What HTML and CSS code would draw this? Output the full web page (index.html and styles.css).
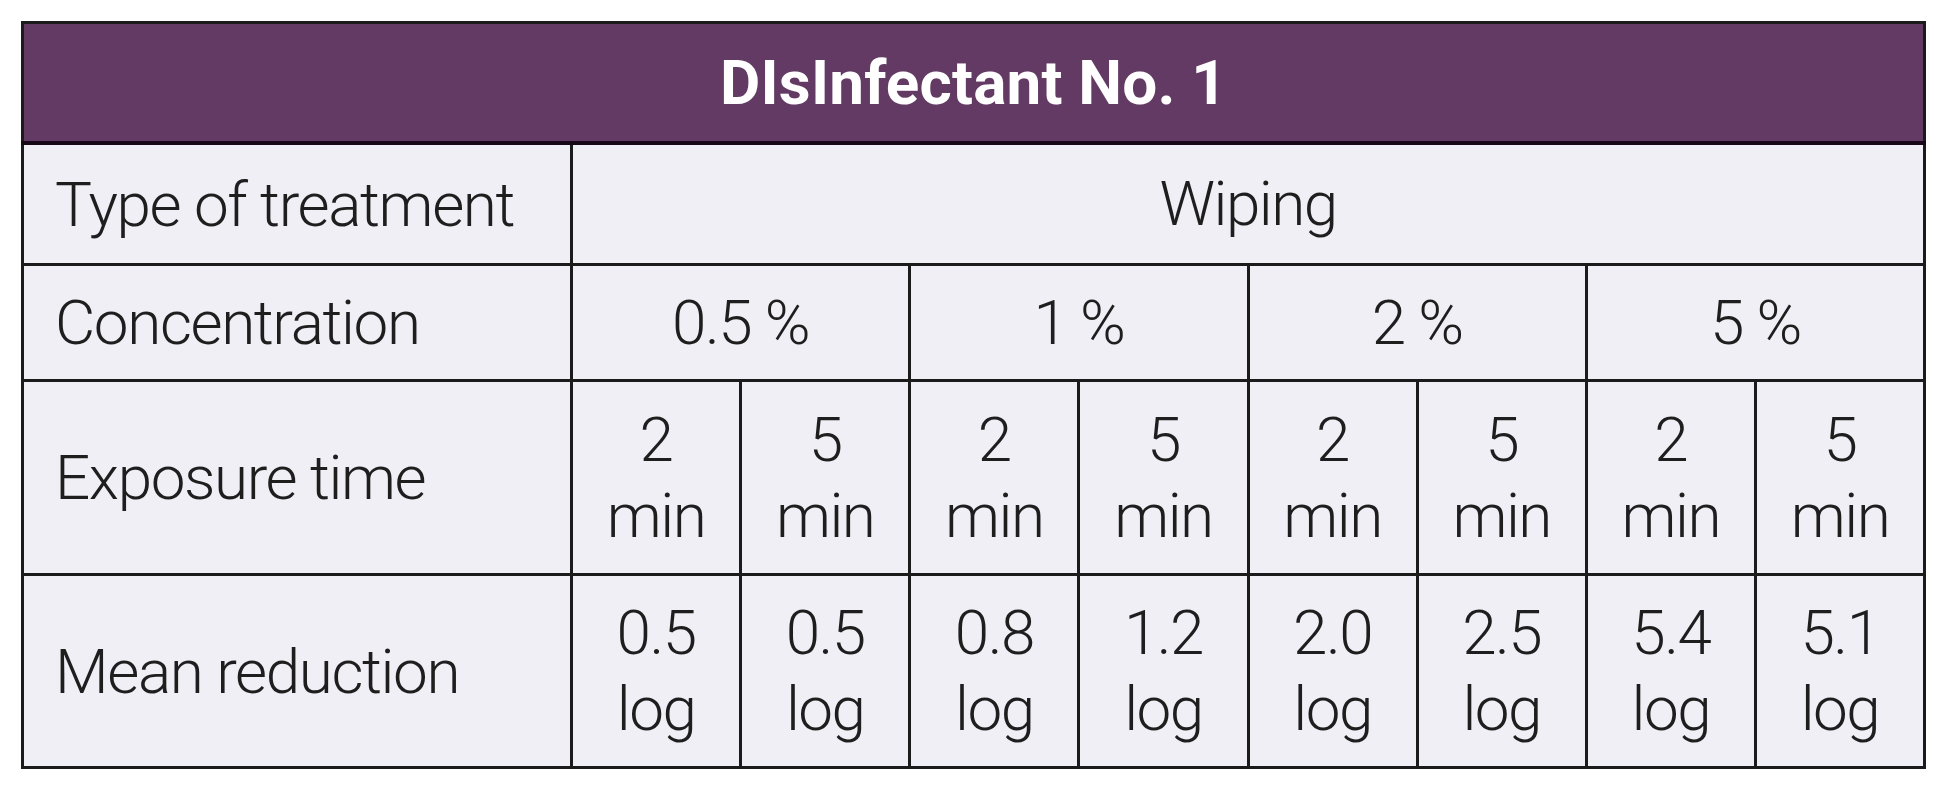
FILE: index.html
```html
<!DOCTYPE html>
<html lang="en">
<head>
<meta charset="utf-8">
<title>Disinfectant No. 1</title>
<link rel="stylesheet" href="styles.css">
</head>
<body>
<table class="data">
  <colgroup>
    <col class="c-label">
    <col class="c-val"><col class="c-val"><col class="c-val"><col class="c-val">
    <col class="c-val"><col class="c-val"><col class="c-val"><col class="c-val">
  </colgroup>
  <thead>
    <tr class="r-head"><th colspan="9" class="title">DIsInfectant No. 1</th></tr>
  </thead>
  <tbody>
    <tr class="r-single">
      <td class="label">Type of treatment</td>
      <td colspan="8" class="val">Wiping</td>
    </tr>
    <tr class="r-conc">
      <td class="label">Concentration</td>
      <td colspan="2" class="val">0.5 %</td>
      <td colspan="2" class="val">1 %</td>
      <td colspan="2" class="val">2 %</td>
      <td colspan="2" class="val">5 %</td>
    </tr>
    <tr class="r-double">
      <td class="label">Exposure time</td>
      <td class="val">2<br>min</td>
      <td class="val">5<br>min</td>
      <td class="val">2<br>min</td>
      <td class="val">5<br>min</td>
      <td class="val">2<br>min</td>
      <td class="val">5<br>min</td>
      <td class="val">2<br>min</td>
      <td class="val">5<br>min</td>
    </tr>
    <tr class="r-double r-last">
      <td class="label">Mean reduction</td>
      <td class="val">0.5<br>log</td>
      <td class="val">0.5<br>log</td>
      <td class="val">0.8<br>log</td>
      <td class="val">1.2<br>log</td>
      <td class="val">2.0<br>log</td>
      <td class="val">2.5<br>log</td>
      <td class="val">5.4<br>log</td>
      <td class="val">5.1<br>log</td>
    </tr>
  </tbody>
</table>
</body>
</html>
```

FILE: styles.css
```css
html, body {
  margin: 0;
  padding: 0;
  background: #ffffff;
}

body {
  padding: 21px 0 0 21px;
  font-family: Roboto, "Liberation Sans", sans-serif;
  color: #1e1e1e;
}

.data {
  width: 1902px;
  border-collapse: collapse;
  table-layout: fixed;
  background: #f0eff6;
}

.c-label { width: 549px; }
.c-val { width: 169.125px; }

.data th,
.data td {
  border: 3px solid #1b1b1b;
  padding: 0;
  vertical-align: middle;
}

.title {
  height: 117px;
  background: #623a63;
  color: #ffffff;
  font-weight: 700;
  font-size: 62px;
  letter-spacing: 0.2px;
  text-align: center;
  border-bottom-color: #180716 !important;
  border-bottom-width: 4px !important;
  line-height: 1;
  padding-top: 2px;
}

.label {
  font-size: 62px;
  font-weight: 300;
  letter-spacing: -1.4px;
  text-align: left;
  padding-left: 31px !important;
  white-space: nowrap;
}

.val {
  font-size: 62px;
  font-weight: 300;
  letter-spacing: -1.5px;
  text-align: center;
  line-height: 76px;
}

.r-single td { height: 118px; }
.r-conc td { height: 113px; }
.r-double td { height: 191px; }
.r-last td { height: 190px; }
```
